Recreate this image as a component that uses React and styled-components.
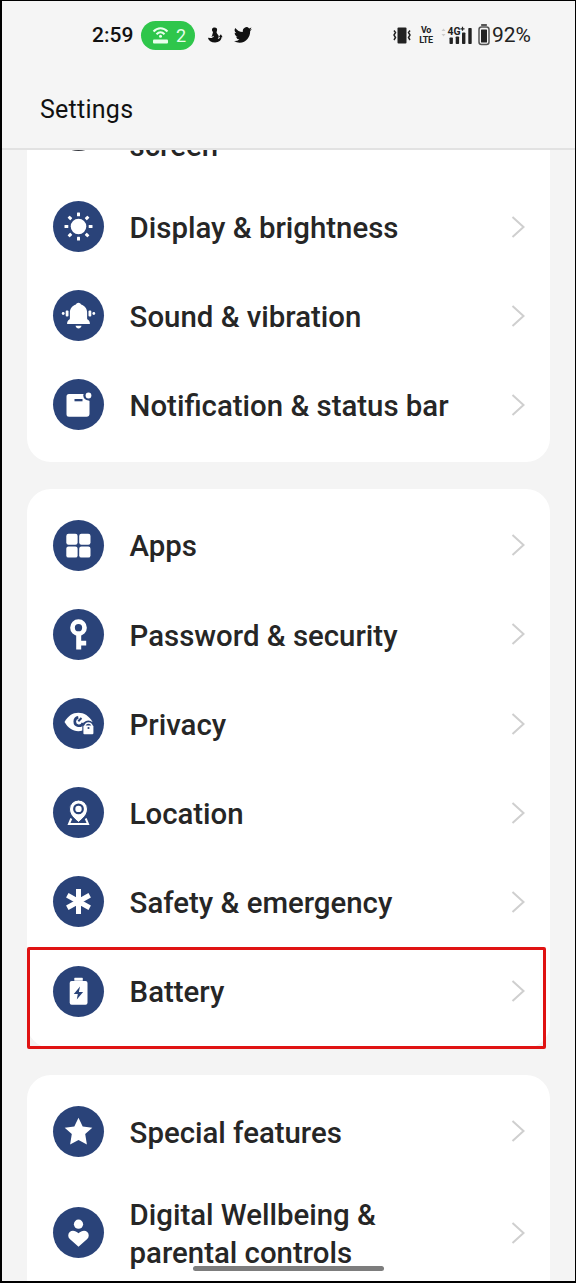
import React from "react";
import styled, { createGlobalStyle } from "styled-components";

const GlobalStyle = createGlobalStyle`
  * { box-sizing: border-box; }
  body { margin: 0; background: #f4f4f4; font-family: Roboto, "Liberation Sans", sans-serif; }
`;

const Screen = styled.main`
  position: relative;
  width: 576px;
  height: 1283px;
  overflow: hidden;
  display: flex;
  flex-direction: column;
  background: #f4f4f4;
  border: solid #000;
  border-width: 1px 1px 2px 2px;
`;

const Header = styled.header`
  flex: none;
  height: 149px;
  background: #f5f5f5;
  border-bottom: 2px solid #e2e2e2;
`;

const StatusBar = styled.div`
  display: flex;
  align-items: center;
  justify-content: space-between;
  height: 68px;
  padding: 0 44px 0 90px;
`;

const StatusGroup = styled.div`
  display: flex;
  align-items: center;
`;

const Time = styled.span`
  width: 49px;
  font-size: 21px;
  font-weight: 500;
  line-height: 28px;
  color: #111;
`;

const HotspotPill = styled.span`
  display: flex;
  align-items: center;
  gap: 7px;
  width: 54px;
  height: 29px;
  padding-left: 11px;
  margin-right: 12px;
  border-radius: 15px;
  background: #2fc64b;
  color: #e9ffec;
  font-size: 18px;
`;

const StatusIcon = styled.svg`
  flex: none;
  display: block;
  margin-left: ${(p) => p.$gap || 0}px;
`;

const NetworkBadge = styled.span`
  display: flex;
  flex-direction: column;
  align-items: center;
  width: 14px;
  margin-left: 8px;
  font-size: 9px;
  font-weight: 700;
  line-height: 10px;
  letter-spacing: -0.4px;
  color: #222;
`;

const Percent = styled.span`
  margin-left: 2px;
  font-size: 21px;
  line-height: 28px;
  color: #222;
`;

const Title = styled.h1`
  margin: 26px 0 0 38px;
  font-size: 25px;
  font-weight: 400;
  line-height: 30px;
  letter-spacing: 0.25px;
  color: #111;
`;

const List = styled.div`
  flex: 1;
  min-height: 0;
  overflow: hidden;
  display: flex;
  flex-direction: column;
  justify-content: flex-start;
  gap: 27px;
  padding: 0 25px 0 25px;
`;

const Card = styled.section`
  flex: none;
  padding: 12px 0;
  margin-top: ${(p) => p.$shift || 0}px;
  border-radius: 24px;
  background: #fff;
`;

const Row = styled.div`
  display: flex;
  align-items: center;
  height: ${(p) => (p.$tall ? 114 : 89.2)}px;
  padding: 0 25px 0 26px;
`;

const Disc = styled.span`
  flex: none;
  width: 51px;
  height: 51px;
  border-radius: 50%;
  background: ${(p) => (p.$dark ? "#33363d" : "#2a4379")};

  svg { display: block; width: 51px; height: 51px; }
`;

const Label = styled.span`
  flex: 1;
  margin-left: 25.6px;
  padding-top: 3px;
  font-size: 29.4px;
  font-weight: 500;
  line-height: 38.5px;
  color: #262626;
  white-space: pre-line;
`;

const Chevron = styled.svg`
  flex: none;
  display: block;
`;

const Highlight = styled.div`
  position: absolute;
  left: 25px;
  top: 946px;
  width: 519px;
  height: 102px;
  border: 3px solid #e01313;
  border-radius: 2px;
`;

const HomeBar = styled.div`
  position: absolute;
  left: 191px;
  top: 1265px;
  width: 191px;
  height: 5px;
  border-radius: 3px;
  background: #7d7d7d;
`;

const BLUE = "#2a4379";

const icons = {
  lock: null,
  sun: (
    <g>
      <circle cx="25.5" cy="25.5" r="7.8" />
      {[0, 45, 90, 135, 180, 225, 270, 315].map((a) => (
        <rect key={a} x="24" y="11.5" width="3" height="3.8" rx=".5" transform={`rotate(${a} 25.5 25.5)`} />
      ))}
    </g>
  ),
  bell: (
    <g>
      <path d="M25.500 12.800c1.200 0 2 .7 2.600 1.700 3.600 1.300 6 4.200 6 7.900v5.600c0 1 .2 1.300.9 1.800 1.400 1 1.900 1.900 1.900 4.300H14.100c0-2.400.5-3.300 1.900-4.300.7-.5.9-.8.9-1.800v-5.600c0-3.700 2.400-6.600 6-7.900.6-1 1.400-1.700 2.600-1.700z" />
      <path d="M22.500 35.800h6c-.5 1.900-1.500 2.700-3 2.700s-2.500-.8-3-2.700z" />
      <rect x="12.700" y="20.500" width="2.800" height="6" rx="1" />
      <rect x="35.500" y="20.500" width="2.800" height="6" rx="1" />
      <circle cx="10.200" cy="23.500" r="1.400" />
      <circle cx="40.800" cy="23.500" r="1.400" />
    </g>
  ),
  notification: (
    <g>
      <path d="M16 15h16.500v3.500l4 3.500v12.800a3 3 0 0 1-3 3H16a2.500 2.500 0 0 1-2.500-2.500V17.500a2.500 2.500 0 0 1 2.500-2.500z" />
      <circle cx="35.300" cy="16.500" r="5" fill={BLUE} />
      <circle cx="35.500" cy="16.500" r="2.900" />
      <rect x="21.500" y="20" width="8" height="2.300" fill={BLUE} />
    </g>
  ),
  apps: (
    <g>
      <rect x="13.300" y="13.700" width="11.300" height="11.100" rx="2.200" />
      <rect x="26.200" y="13.700" width="11.300" height="11.100" rx="2.200" />
      <rect x="13.300" y="26.500" width="11.300" height="11.100" rx="2.200" />
      <rect x="26.200" y="26.500" width="11.300" height="11.100" rx="2.200" />
    </g>
  ),
  key: (
    <g>
      <circle cx="25.500" cy="18.700" r="6" fill="none" stroke="#fff" strokeWidth="4.700" />
      <path d="M23.200 25.500h5v6.200h5v4.900h-5v4h-5z" />
    </g>
  ),
  eye: (
    <g>
      <path d="M11.500 24c3.500-6 8-9.200 13.800-9.200S36.100 18 39.500 24c-3.400 6-8.400 9.200-14.200 9.200S15 30 11.500 24z" />
      <path d="M25.300 19.400a4.200 4.200 0 1 0 4.600 5.600" fill="none" stroke={BLUE} strokeWidth="2.600" />
      <path d="M25.300 23.200 28.500 20" stroke={BLUE} strokeWidth="2" />
      <path d="M29.300 37v-8.500a6 6 0 0 1 12 0V37z" fill={BLUE} />
      <path d="M31.900 28.500a3.600 3.600 0 0 1 7.200 0" fill="none" stroke="#fff" strokeWidth="1.500" />
      <rect x="30.400" y="27.500" width="10" height="8.700" rx="1" />
      <circle cx="35.500" cy="30" r="1.100" fill={BLUE} />
    </g>
  ),
  pin: (
    <g>
      <path d="M18.300 31.500 16 36.900h19l-2.300-5.400" fill="none" stroke="#fff" strokeWidth="2" />
      <path d="M25.500 35.300c-4.700-4-9-7.500-9-13.300a9 9 0 0 1 18 0c0 5.800-4.300 9.300-9 13.300z" stroke={BLUE} strokeWidth="1" />
      <circle cx="25.500" cy="21.900" r="4.300" fill="#fff" stroke={BLUE} strokeWidth="2.200" />
    </g>
  ),
  asterisk: (
    <path d="M25.500 13v25M14.300 19.200l22.400 12.600M36.700 19.200l-22.400 12.600" stroke="#fff" strokeWidth="5" />
  ),
  battery: (
    <g>
      <rect x="21.300" y="11.800" width="8.500" height="3" rx=".6" />
      <rect x="16.700" y="15" width="17.800" height="23.800" rx="2" />
      <path d="M27 20.500 20.800 28h4l-1 5.500 6.300-7.500h-4.200z" fill={BLUE} />
    </g>
  ),
  star: (
    <path d="m25.500 11.700 4.200 8.900 9.600 1.100-7.100 6.400 1.700 10.500-8.400-4.500-8.400 4.500 1.700-10.500-7.100-6.400 9.600-1.100z" />
  ),
  heart: (
    <g>
      <circle cx="25.500" cy="17.200" r="4.600" />
      <path d="M25.500 39.700 16.800 32c-2.100-2-2-5.300-.1-7.100 2.300-2.100 6-1.500 8.800 1.400 2.800-2.900 6.500-3.500 8.800-1.400 1.900 1.800 2 5.100-.1 7.100z" />
    </g>
  ),
};

const groups = [
  {
    shift: -94,
    items: [
      { icon: "lock", label: "Home screen & Lock\nscreen", tall: true },
      { icon: "sun", label: "Display & brightness" },
      { icon: "bell", label: "Sound & vibration" },
      { icon: "notification", label: "Notification & status bar" },
    ],
  },
  {
    items: [
      { icon: "apps", label: "Apps" },
      { icon: "key", label: "Password & security" },
      { icon: "eye", label: "Privacy" },
      { icon: "pin", label: "Location" },
      { icon: "asterisk", label: "Safety & emergency" },
      { icon: "battery", label: "Battery" },
    ],
  },
  {
    items: [
      { icon: "star", label: "Special features" },
      { icon: "heart", label: "Digital Wellbeing &\nparental controls", tall: true },
    ],
  },
];

function SettingRow({ icon, label, tall }) {
  return (
    <Row $tall={tall}>
      <Disc $dark={icon === "lock"}>
        <svg viewBox="0 0 51 51" fill="#fff">{icons[icon]}</svg>
      </Disc>
      <Label>{label}</Label>
      <Chevron width="14" height="24" viewBox="0 0 14 24" fill="none" stroke="#cfcfcf" strokeWidth="2">
        <path d="M1.500 2 12.500 12 1.500 22" />
      </Chevron>
    </Row>
  );
}

function PhoneStatus() {
  return (
    <StatusBar>
      <StatusGroup>
        <Time>2:59</Time>
        <HotspotPill>
          <StatusIcon width="17" height="18" viewBox="0 0 17 18" fill="none" stroke="#e9ffec" strokeWidth="2">
            <path d="M1.500 5.500c4-4.500 10-4.500 14 0M4.500 8.300c2.500-2.600 5.500-2.600 8 0" />
            <circle cx="8.500" cy="10.200" r="1.500" fill="#e9ffec" stroke="none" />
            <rect x="1" y="13.500" width="15" height="4" rx="1" fill="#e9ffec" stroke="none" />
          </StatusIcon>
          2
        </HotspotPill>
        <StatusIcon width="16" height="16" viewBox="0 0 16 16" fill="#111">
          <path d="M7.500.5c2 0 3 1.300 2.500 3-.2 1-.6 1.500-.3 2.500l1.800 2.500c.5 1.300.2 2.400-.8 3.300 1.500.2 2.100-.6 2.200-1.800l-1-.3 2-2.400 1.700 2.900-1-.1c-.2 3.500-2.800 5.400-6.500 5.400-4 0-6.500-1.600-7.200-4.700l2.500.3 2.600-.1-1.400-1.300 1-3L6 5C5 4 4.800 3 5.100 2c.3-1 1.200-1.500 2.400-1.500z" />
          <circle cx="6" cy="9.500" r=".7" fill="#f5f5f5" />
        </StatusIcon>
        <StatusIcon $gap="11" width="18" height="16" viewBox="0 2 24 20" fill="#111" preserveAspectRatio="none">
          <path d="M23.950 4.570a10 10 0 0 1-2.820.77 4.960 4.960 0 0 0 2.160-2.720c-.95.550-2 .950-3.120 1.180a4.920 4.920 0 0 0-8.380 4.480C7.690 8.090 4.070 6.130 1.640 3.160a4.920 4.920 0 0 0 1.520 6.570 4.900 4.900 0 0 1-2.230-.61v.06a4.920 4.920 0 0 0 3.950 4.830 5 5 0 0 1-2.210.08 4.940 4.940 0 0 0 4.600 3.420A9.870 9.870 0 0 1 0 19.540a14 14 0 0 0 7.550 2.210c9.050 0 14-7.500 14-13.980 0-.21 0-.42-.02-.63a9.940 9.940 0 0 0 2.420-2.570z" />
        </StatusIcon>
      </StatusGroup>
      <StatusGroup>
        <StatusIcon width="18" height="17" viewBox="0 0 18 17" fill="#222">
          <rect x="4.500" y=".5" width="9" height="16" rx="1" />
          <path d="m1 3.500 1.500 2L1 8l1.500 2.500L1 13M17 3.500l-1.500 2L17 8l-1.500 2.500L17 13" fill="none" stroke="#222" strokeWidth="1.500" />
        </StatusIcon>
        <NetworkBadge>
          <span>Vo</span>
          <span>LTE</span>
        </NetworkBadge>
        <StatusIcon $gap="8" width="33" height="20" viewBox="0 0 33 20" fill="#222" fontFamily="Roboto, sans-serif" fontWeight="700">
          <path d="m.5 6 2-2.500 2 2.500zM.5 9l2 2.500 2-2.500z" fill="#ccc" />
          <text x="6.500" y="10" fontSize="11" textLength="13" lengthAdjust="spacingAndGlyphs">4G</text>
          <path d="M19.500 3.800h4M21.500 1.800v4" stroke="#222" strokeWidth="1.200" />
          <rect x="8.500" y="12.500" width="3.400" height="6.500" rx=".8" />
          <rect x="14.700" y="11.500" width="3.400" height="7.500" rx=".8" />
          <rect x="21" y="7.500" width="3.400" height="11.500" rx=".8" />
          <rect x="27.300" y="3" width="3.400" height="16" rx=".8" />
        </StatusIcon>
        <StatusIcon $gap="4" width="12" height="22" viewBox="0 0 12 22" fill="#222">
          <rect x="3" y="0" width="6" height="2" rx=".7" fill="#555" />
          <rect x="1" y="3" width="10" height="17.500" rx="2.500" fill="none" stroke="#555" strokeWidth="1.500" />
          <rect x="3" y="5.500" width="6" height="13" rx=".6" />
        </StatusIcon>
        <Percent>92%</Percent>
      </StatusGroup>
    </StatusBar>
  );
}

export default function App() {
  return (
    <>
      <GlobalStyle />
      <Screen>
        <Header>
          <PhoneStatus />
          <Title>Settings</Title>
        </Header>
        <List>
          {groups.map((group, i) => (
            <Card key={i} $shift={group.shift}>
              {group.items.map((item) => (
                <SettingRow key={item.label} {...item} />
              ))}
            </Card>
          ))}
        </List>
        <Highlight />
        <HomeBar />
      </Screen>
    </>
  );
}
